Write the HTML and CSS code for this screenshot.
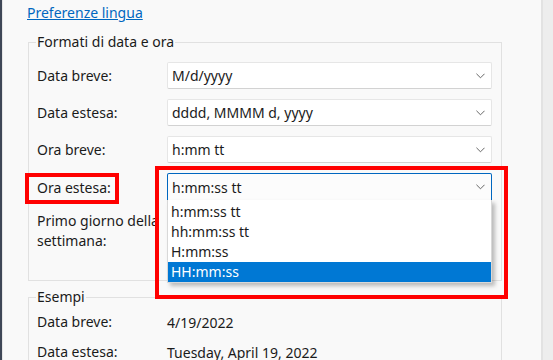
FILE: index.html
```html
<!DOCTYPE html>
<html lang="it">
<head>
  <meta charset="UTF-8" />
  <title>Formati di data e ora</title>
  <link rel="stylesheet" href="styles.css">
</head>
<body>
  <div class="edge"></div>

  <main class="content">
    <a class="lang-link" href="#">Preferenze lingua</a>

    <fieldset class="group formats">
      <legend>Formati di data e ora</legend>

      <div class="row">
        <span class="label">Data breve:</span>
        <div class="combo"><span>M/d/yyyy</span><svg class="chev" viewBox="0 0 10 6"><path d="M0.5 0.5 L5 5 L9.5 0.5" /></svg></div>
      </div>
      <div class="row">
        <span class="label">Data estesa:</span>
        <div class="combo"><span>dddd, MMMM d, yyyy</span><svg class="chev" viewBox="0 0 10 6"><path d="M0.5 0.5 L5 5 L9.5 0.5" /></svg></div>
      </div>
      <div class="row">
        <span class="label">Ora breve:</span>
        <div class="combo"><span>h:mm tt</span><svg class="chev" viewBox="0 0 10 6"><path d="M0.5 0.5 L5 5 L9.5 0.5" /></svg></div>
      </div>
      <div class="row open">
        <span class="label marked">Ora estesa:</span>
        <div class="combo focused"><span>h:mm:ss tt</span><svg class="chev" viewBox="0 0 10 6"><path d="M0.5 0.5 L5 5 L9.5 0.5" /></svg>
          <ul class="dropdown">
            <li>h:mm:ss tt</li>
            <li>hh:mm:ss tt</li>
            <li>H:mm:ss</li>
            <li class="selected">HH:mm:ss</li>
          </ul>
          <div class="mark-box"></div>
        </div>
      </div>
      <div class="row tall">
        <span class="label">Primo giorno della<br>settimana:</span>
        <div class="combo"></div>
      </div>
    </fieldset>

    <fieldset class="group examples">
      <legend>Esempi</legend>
      <div class="sample"><span class="label">Data breve:</span><span>4/19/2022</span></div>
      <div class="sample"><span class="label">Data estesa:</span><span>Tuesday, April 19, 2022</span></div>
    </fieldset>
  </main>

  <div class="scrollbar"></div>
</body>
</html>
```

FILE: styles.css
```css
html, body {
  height: 100%;
}
body {
  margin: 0;
  display: flex;
  background: #f9f9f9;
  font-family: "Noto Sans", "Open Sans", sans-serif;
  font-size: 14px;
  color: #1b1b1b;
  overflow: hidden;
}

.edge {
  width: 2px;
  background: #3e4757;
  border-right: 1px solid #e6e6e6;
}
.scrollbar {
  width: 10px;
  background: #ededed;
  border-left: 2px solid #e2e2e2;
}

.content {
  flex: 1;
  padding: 3px 0 0 24px;
}

.lang-link {
  display: inline-block;
  color: #0067c0;
  text-decoration: underline;
  line-height: 19px;
}

.group {
  width: 474px;
  margin: 10px 0 0 1px;
  padding: 10px 9px 11px 8px;
  border: 1px solid #e1e1e1;
  box-sizing: border-box;
}
.group legend {
  padding: 0 1px;
  margin-left: -1px;
  line-height: 20px;
}

.row {
  display: flex;
  align-items: center;
  margin-bottom: 10px;
}
.row.open {
  margin-bottom: 9px;
}
.row.tall {
  align-items: flex-start;
  height: 58px;
  margin-bottom: 0;
}
.label {
  width: 130px;
  flex: none;
  line-height: 20px;
}
.row.tall .label {
  white-space: nowrap;
}

.combo {
  position: relative;
  flex: 1;
  height: 27px;
  display: flex;
  align-items: center;
  justify-content: space-between;
  padding: 0 6px 0 4px;
  background: #fff;
  border: 1px solid #e6e6e6;
  border-bottom-color: #d2d2d2;
  border-radius: 2px;
  box-sizing: border-box;
}
.row.tall .combo {
  background: transparent;
}
.combo.focused {
  height: 29px;
  border-color: #0067c0;
  border-width: 1px 1px 2px 1px;
  background: #fcfcfc;
}
.chev {
  width: 9px;
  height: 6px;
  fill: none;
  stroke: #555;
  stroke-width: 1;
}

.dropdown {
  position: absolute;
  top: 100%;
  left: -1px;
  right: -1px;
  margin: 0;
  padding: 2px 0 0;
  list-style: none;
  background: #fff;
  border: 1px solid #d8d8d8;
  border-top: none;
  box-shadow: 3px 3px 4px rgba(0, 0, 0, 0.25);
  z-index: 5;
}
.dropdown li {
  height: 20px;
  line-height: 20px;
  padding-left: 3px;
}
.dropdown li.selected {
  background: #0078d4;
  color: #fff;
}

/* annotation boxes */
.label.marked {
  position: relative;
}
.label.marked::after {
  content: "";
  position: absolute;
  left: -12px;
  top: -5px;
  width: 94px;
  height: 31px;
  border: 4px solid #ff0000;
  box-sizing: border-box;
}
.mark-box {
  position: absolute;
  left: -13px;
  top: -8px;
  width: 353px;
  height: 133px;
  border: 4px solid #ff0000;
  box-sizing: border-box;
  z-index: 6;
  pointer-events: none;
}

.examples {
  margin-top: 6px;
  padding-top: 0;
}
.sample {
  display: flex;
  height: 30px;
  align-items: center;
}
```
